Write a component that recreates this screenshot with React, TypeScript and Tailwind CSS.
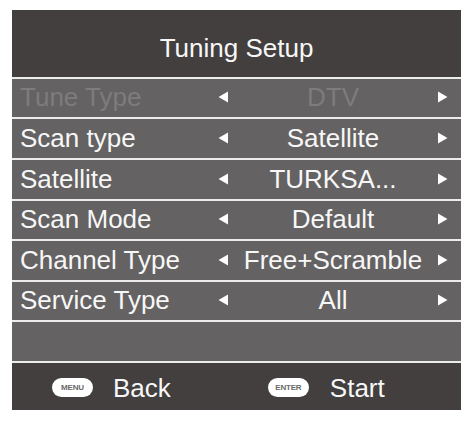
import React from "react";

const font = { fontFamily: '"Liberation Sans", Arial, sans-serif' };

function LeftArrow() {
  return (
    <svg width="10" height="12" viewBox="0 0 10 12" className="shrink-0">
      <polygon points="10,0.5 10,11.5 0.5,6" fill="#ffffff" />
    </svg>
  );
}
function RightArrow() {
  return (
    <svg width="10" height="12" viewBox="0 0 10 12" className="shrink-0">
      <polygon points="0,0.5 0,11.5 9.5,6" fill="#ffffff" />
    </svg>
  );
}

const Sep = () => <div className="h-[2px] bg-[#ececec]" />;

function Row({ label, value, h, disabled }: { label: string; value: string; h: string; disabled?: boolean }) {
  const color = disabled ? "text-[#7e7c7c]" : "text-[#f7f7f7]";
  return (
    <div className={`flex items-center bg-[#646262] ${h} pb-[2px]`}>
      <div className={`w-[206px] pl-[8px] text-[26px] leading-[26px] whitespace-nowrap ${color}`}>{label}</div>
      <LeftArrow />
      <div className={`flex-1 text-center text-[26px] leading-[26px] whitespace-nowrap ${color}`}>{value}</div>
      <RightArrow />
      <div className="w-[13px] shrink-0" />
    </div>
  );
}

export default function App() {
  return (
    <div className="w-[470px] h-[421px] bg-white pt-[10px] pl-[12px]" style={font}>
      <div className="w-[449px] flex flex-col">
        <div className="h-[67px] bg-[#433f3f] pt-[25px] text-center text-[26px] leading-[26px] text-[#f7f7f7]">
          Tuning Setup
        </div>
        <Sep />
        <Row label="Tune Type" value="DTV" h="h-[38px]" disabled />
        <Sep />
        <Row label="Scan type" value="Satellite" h="h-[39px]" />
        <Sep />
        <Row label="Satellite" value="TURKSA..." h="h-[39px]" />
        <Sep />
        <Row label="Scan Mode" value="Default" h="h-[38px]" />
        <Sep />
        <Row label="Channel Type" value="Free+Scramble" h="h-[39px]" />
        <Sep />
        <Row label="Service Type" value="All" h="h-[38px]" />
        <Sep />
        <div className="h-[39px] bg-[#646262]" />
        <Sep />
        <div className="h-[47px] bg-[#433f3f] flex items-center pl-[40px] pt-[2px]">
          <div className="w-[41px] h-[19px] rounded-full bg-white flex items-center justify-center text-[8px] font-bold text-[#6a6a6a] leading-none tracking-[-0.2px]">
            MENU
          </div>
          <div className="ml-[20px] text-[26px] leading-[26px] text-[#f7f7f7]">Back</div>
          <div className="ml-[97px] w-[41px] h-[19px] rounded-full bg-white flex items-center justify-center text-[8px] font-bold text-[#6a6a6a] leading-none tracking-[-0.2px]">
            ENTER
          </div>
          <div className="ml-[21px] text-[26px] leading-[26px] text-[#f7f7f7]">Start</div>
        </div>
      </div>
    </div>
  );
}
